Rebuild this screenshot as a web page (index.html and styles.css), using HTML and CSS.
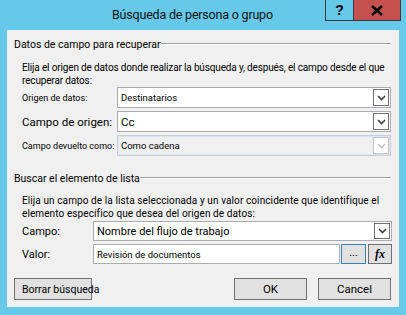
FILE: index.html
```html
<!DOCTYPE html>
<html lang="es">
<head>
    <meta charset="UTF-8">
    <meta name="viewport" content="width=device-width, initial-scale=1.0">
    <title>Búsqueda de persona o grupo</title>
    <link rel="stylesheet" href="styles.css">
</head>
<body>
    <div class="titlebar">
        <div class="title">Búsqueda de persona o grupo</div>
        <div class="caption-btns">
            <div class="cbtn help">?</div>
            <div class="cbtn close">
                <svg width="14" height="11" viewBox="0 0 14 11">
                    <path d="M2 1 L12 10 M12 1 L2 10" stroke="#000" stroke-width="2.6" fill="none" />
                </svg>
            </div>
        </div>
    </div>

    <div class="panel">
        <div class="group-head"><span>Datos de campo para recuperar</span></div>
        <p class="desc">Elija el origen de datos donde realizar la búsqueda y, después, el campo desde el que recuperar datos:</p>

        <div class="form form-top">
            <div class="lbl small">Origen de datos:</div>
            <div class="combo">
                <span class="val small">Destinatarios</span>
                <span class="arrow"><svg width="9" height="6" viewBox="0 0 9 6"><path d="M1 1 L4.5 4.5 L8 1" stroke="#444" stroke-width="1.6" fill="none" /></svg></span>
            </div>

            <div class="lbl big">Campo de origen:</div>
            <div class="combo">
                <span class="val big">Cc</span>
                <span class="arrow"><svg width="9" height="6" viewBox="0 0 9 6"><path d="M1 1 L4.5 4.5 L8 1" stroke="#444" stroke-width="1.6" fill="none" /></svg></span>
            </div>

            <div class="lbl small">Campo devuelto como:</div>
            <div class="combo disabled">
                <span class="val small">Como cadena</span>
                <span class="arrow"><svg width="9" height="6" viewBox="0 0 9 6"><path d="M1 1 L4.5 4.5 L8 1" stroke="#c4c4c4" stroke-width="1.6" fill="none" /></svg></span>
            </div>
        </div>

        <div class="group-head second"><span>Buscar el elemento de lista</span></div>
        <p class="desc wide">Elija un campo de la lista seleccionada y un valor coincidente que identifique el elemento específico que desea del origen de datos:</p>

        <div class="form form-bottom">
            <div class="lbl mid">Campo:</div>
            <div class="combo">
                <span class="val mid">Nombre del flujo de trabajo</span>
                <span class="arrow"><svg width="9" height="6" viewBox="0 0 9 6"><path d="M1 1 L4.5 4.5 L8 1" stroke="#444" stroke-width="1.6" fill="none" /></svg></span>
            </div>

            <div class="lbl mid">Valor:</div>
            <div class="value-row">
                <div class="textbox"><span class="val small">Revisión de documentos</span></div>
                <div class="mini-btn dots">...</div>
                <div class="mini-btn fx">fx</div>
            </div>
        </div>

        <div class="footer">
            <div class="btn clear">Borrar búsqueda</div>
            <div class="btn ok">OK</div>
            <div class="btn cancel">Cancel</div>
        </div>
    </div>
</body>
</html>
```

FILE: styles.css
```css
body {
    margin: 0;
    height: 315px;
    background: #66c9ea;
    font-family: Roboto, "Liberation Sans", sans-serif;
    color: #000;
    overflow: hidden;
}
.titlebar {
    display: flex;
    height: 30px;
}
.title {
    margin-left: 112px;
    padding-top: 7px;
    font-size: 12.5px;
    letter-spacing: -0.2px;
    color: #111;
    white-space: nowrap;
}
.caption-btns {
    display: flex;
    margin-left: auto;
    margin-right: 5px;
    height: 21px;
}
.cbtn {
    box-sizing: border-box;
    height: 21px;
    display: flex;
    align-items: center;
    justify-content: center;
    border: 1px solid #3a3a3a;
    border-top: none;
}
.help {
    width: 29px;
    font: bold 14px "Liberation Sans", sans-serif;
}
.close {
    width: 47px;
    background: #c75050;
    border-left: none;
}
.panel {
    margin: 0 7px;
    height: 277px;
    background: #f0f0f0;
    padding: 0 8px 0 7px;
    box-sizing: border-box;
}
.group-head {
    display: flex;
    align-items: center;
    padding-top: 8px;
    font-size: 10.5px;
    line-height: 14px;
    white-space: nowrap;
}
.group-head::after {
    content: "";
    flex: 1;
    height: 0;
    border-top: 1px solid #a0a0a0;
    border-bottom: 1px solid #ffffff;
    margin-top: -3px;
}
.group-head.second {
    padding-top: 16px;
}
.desc {
    margin: 9px 0 0 8px;
    height: 26px;
    font-size: 10px;
    line-height: 13px;
    letter-spacing: -0.15px;
    width: 370px;
}
.desc.wide {
    letter-spacing: 0.1px;
    margin-top: 8px;
}
.form {
    display: grid;
    margin-left: 8px;
}
.form-top {
    grid-template-columns: 95px 1fr;
    grid-auto-rows: 21px;
    row-gap: 3px;
}
.form-bottom {
    grid-template-columns: 71px 1fr;
    grid-auto-rows: 20px;
    row-gap: 3px;
    margin-top: 1px;
}
.lbl {
    display: flex;
    align-items: center;
    white-space: nowrap;
}
.small {
    font-size: 9px;
}
.mid {
    font-size: 11px;
}
.big {
    font-size: 11.5px;
}
.combo {
    box-sizing: border-box;
    height: 100%;
    display: flex;
    align-items: center;
    background: #fff;
    border: 1px solid #abadb3;
    padding: 0 1px 0 3px;
}
.combo.disabled {
    background: #f0f0f0;
    border: 1px solid #c5cfdc;
    box-shadow: inset 0 0 0 1px #dfe5ee;
}
.val {
    flex: 1;
    white-space: nowrap;
}
.val.small {
    font-size: 9.5px;
}
.arrow {
    box-sizing: border-box;
    width: 16px;
    height: 17px;
    border: 1px solid #707070;
    background: #fff;
    display: flex;
    align-items: center;
    justify-content: center;
}
.form-bottom .arrow {
    height: 16px;
}
.disabled .arrow {
    border-color: #c4c4c4;
}
.value-row {
    display: flex;
    height: 20px;
}
.textbox {
    box-sizing: border-box;
    width: 247px;
    height: 20px;
    display: flex;
    align-items: center;
    background: #fff;
    border: 1px solid #abadb3;
    padding-left: 3px;
}
.mini-btn {
    box-sizing: border-box;
    height: 20px;
    display: flex;
    align-items: center;
    justify-content: center;
    background: #e1e1e1;
    border: 1px solid #adadad;
}
.dots {
    width: 25px;
    margin-left: 1px;
    border-color: #3c7fb1;
    font-size: 11px;
    padding-bottom: 4px;
}
.fx {
    width: 24px;
    margin-left: 2px;
    font: italic bold 12px "Liberation Serif", serif;
    border-color: #707070;
}
.footer {
    display: flex;
    margin-top: 14px;
}
.btn {
    box-sizing: border-box;
    height: 22px;
    display: flex;
    align-items: center;
    justify-content: center;
    background: #e1e1e1;
    border: 1px solid #707070;
    font-size: 11.5px;
}
.clear {
    width: 78px;
    justify-content: flex-start;
    padding-left: 7px;
    white-space: nowrap;
    font-size: 10.5px;
}
.ok {
    width: 73px;
    margin-left: auto;
}
.cancel {
    width: 73px;
    margin-left: 11px;
}
```
